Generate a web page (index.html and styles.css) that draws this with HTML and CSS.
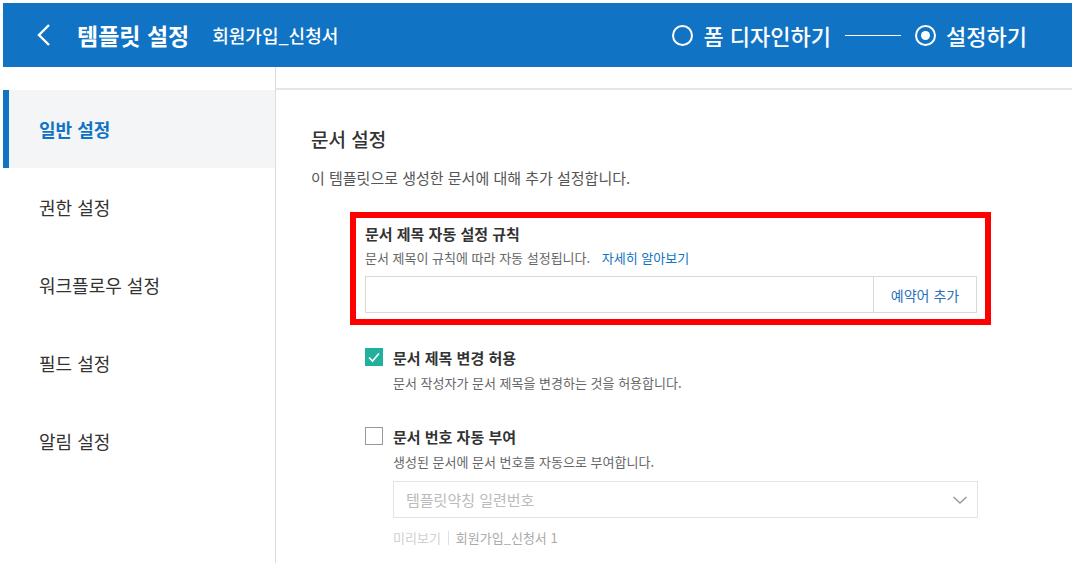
FILE: index.html
```html
<!doctype html>
<html lang="ko">
<head>
    <meta charset="utf-8">
    <meta name="viewport" content="width=device-width, initial-scale=1">
    <title>템플릿 설정</title>
    <link rel="stylesheet" href="styles.css">
</head>
<body>
<div class="app">
    <!-- 상단 바 -->
    <div class="topbar">
        <div class="topbar-left">
            <svg class="back" width="16" height="24" viewBox="0 0 16 24">
                <path d="M13 2 L3 12 L13 22" fill="none" stroke="#fff" stroke-width="2.4"/>
            </svg>
            <span class="page-title">템플릿 설정</span>
            <span class="form-name">회원가입_신청서</span>
        </div>
        <div class="steps">
            <span class="step"><span class="radio"></span>폼 디자인하기</span>
            <span class="step-line"></span>
            <span class="step"><span class="radio on"></span>설정하기</span>
        </div>
    </div>

    <div class="main">
        <!-- 사이드 메뉴 -->
        <div class="sidebar">
            <a class="menu-item active" href="#">일반 설정</a>
            <a class="menu-item" href="#">권한 설정</a>
            <a class="menu-item" href="#">워크플로우 설정</a>
            <a class="menu-item" href="#">필드 설정</a>
            <a class="menu-item" href="#">알림 설정</a>
        </div>

        <!-- 설정 내용 -->
        <div class="content">
            <div class="content-top"></div>
            <div class="content-body">
                <h2 class="section-title">문서 설정</h2>
                <p class="section-desc">이 템플릿으로 생성한 문서에 대해 추가 설정합니다.</p>

                <div class="rule-box">
                    <div class="field-title">문서 제목 자동 설정 규칙</div>
                    <div class="field-desc">문서 제목이 규칙에 따라 자동 설정됩니다. <a href="#" class="more">자세히 알아보기</a></div>
                    <div class="input-group">
                        <input type="text" class="input">
                        <button class="btn-add">예약어 추가</button>
                    </div>
                </div>

                <div class="option">
                    <div class="option-row">
                        <span class="check checked">
                            <svg width="18" height="18" viewBox="0 0 18 18">
                                <path d="M4 9.5 L7.5 13 L14 5.5" fill="none" stroke="#fff" stroke-width="1.6"/>
                            </svg>
                        </span>
                        <span class="option-label">문서 제목 변경 허용</span>
                    </div>
                    <div class="option-desc">문서 작성자가 문서 제목을 변경하는 것을 허용합니다.</div>
                </div>

                <div class="option">
                    <div class="option-row">
                        <span class="check"></span>
                        <span class="option-label">문서 번호 자동 부여</span>
                    </div>
                    <div class="option-desc">생성된 문서에 문서 번호를 자동으로 부여합니다.</div>
                    <div class="select">
                        <span>템플릿약칭 일련번호</span>
                        <svg width="16" height="10" viewBox="0 0 16 10">
                            <path d="M1.5 2 L8 8 L14.5 2" fill="none" stroke="#999" stroke-width="1.5"/>
                        </svg>
                    </div>
                    <div class="preview">
                        <span class="preview-label">미리보기</span>
                        <span class="preview-sep"></span>
                        <span class="preview-value">회원가입_신청서 1</span>
                    </div>
                </div>
            </div>
        </div>
    </div>
</div>
</body>
</html>
```

FILE: styles.css
```css
/* 색상 변수 */
:root {
    --primary: #1073c4;
    --text: #333;
    --text-sub: #666;
    --border: #d9d9d9;
    --check: #20b09c;
}

body {
    margin: 0;
    background: #fff;
    color: var(--text);
    font-family: "Noto Sans CJK KR", "Noto Sans", sans-serif;
}

.app {
    padding: 3px 3px 0 3px;
}

/* 상단 바 */
.topbar {
    height: 64px;
    background: var(--primary);
    color: #fff;
    display: flex;
    align-items: center;
    justify-content: space-between;
}

.topbar-left {
    display: flex;
    align-items: center;
    padding-left: 33px;
}

.back {
    margin-right: 25px;
}

.page-title {
    font-size: 23px;
    font-weight: 700;
    margin-right: 23px;
}

.form-name {
    font-size: 18px;
    font-weight: 500;
}

.steps {
    display: flex;
    align-items: center;
    padding-right: 45px;
}

.step {
    display: flex;
    align-items: center;
    font-size: 22px;
    font-weight: 500;
}

.radio {
    width: 17px;
    height: 17px;
    border: 2px solid #fff;
    border-radius: 50%;
    margin-right: 10px;
    position: relative;
}

.radio.on::after {
    content: "";
    position: absolute;
    left: 4px;
    top: 4px;
    width: 9px;
    height: 9px;
    border-radius: 50%;
    background: #fff;
}

.step-line {
    width: 56px;
    height: 1px;
    background: #fff;
    margin: 0 14px 0 14px;
}

/* 본문 */
.main {
    display: flex;
    height: 496px;
}

.sidebar {
    width: 272px;
    border-right: 1px solid #ddd;
    padding-top: 23px;
    flex-shrink: 0;
}

.menu-item {
    display: flex;
    align-items: center;
    height: 78px;
    padding-left: 30px;
    border-left: 6px solid transparent;
    color: var(--text);
    text-decoration: none;
    font-size: 18px;
}

.menu-item.active {
    background: #f4f5f7;
    border-left-color: var(--primary);
    color: var(--primary);
    font-weight: 700;
}

.content {
    flex: 1;
}

.content-top {
    height: 21px;
    border-bottom: 2px solid #e6e6e6;
}

.content-body {
    padding: 36px 0 0 35px;
}

.section-title {
    margin: 0;
    font-size: 19px;
    font-weight: 500;
    line-height: 26px;
}

.section-desc {
    margin: 16px 0 0 0;
    font-size: 15px;
    color: #555;
    line-height: 20px;
}

/* 빨간 강조 박스 */
.rule-box {
    margin: 24px 0 0 39px;
    width: 612px;
    border: 6px solid #ff0000;
    padding: 6px 8px 6px 9px;
}

.field-title {
    font-size: 15px;
    font-weight: 700;
    line-height: 20px;
}

.field-desc {
    font-size: 13px;
    color: var(--text-sub);
    line-height: 18px;
    margin-top: 5px;
}

.more {
    color: var(--primary);
    text-decoration: none;
    margin-left: 8px;
}

.input-group {
    display: flex;
    height: 37px;
    border: 1px solid var(--border);
    margin-top: 9px;
    box-sizing: border-box;
}

.input {
    flex: 1;
    border: none;
    outline: none;
    padding: 0 10px;
    font-family: inherit;
}

.btn-add {
    width: 103px;
    border: none;
    border-left: 1px solid var(--border);
    background: #fff;
    color: #2a6fb8;
    font-family: inherit;
    font-size: 14px;
    cursor: pointer;
}

/* 체크 옵션 */
.option {
    margin-left: 54px;
}

.rule-box + .option {
    margin-top: 23px;
}

.option + .option {
    margin-top: 35px;
}

.option-row {
    display: flex;
    align-items: center;
    height: 18px;
}

.check {
    width: 18px;
    height: 18px;
    box-sizing: border-box;
    border: 1px solid #999;
    margin-right: 10px;
    display: flex;
}

.check.checked {
    border: none;
    background: var(--check);
}

.option-label {
    font-size: 15px;
    font-weight: 700;
}

.option-desc {
    margin: 8px 0 0 28px;
    font-size: 13px;
    color: var(--text-sub);
    line-height: 18px;
}

.select {
    margin: 10px 0 0 28px;
    width: 585px;
    height: 37px;
    box-sizing: border-box;
    border: 1px solid #e3e3e3;
    display: flex;
    align-items: center;
    justify-content: space-between;
    padding: 0 9px 0 12px;
    font-size: 15px;
    color: #bbb;
}

.preview {
    margin: 10px 0 0 28px;
    display: flex;
    align-items: center;
    font-size: 13px;
}

.preview-label {
    color: #d0d0d0;
}

.preview-sep {
    width: 1px;
    height: 14px;
    background: #e0e0e0;
    margin: 0 7px;
}

.preview-value {
    color: #aaa;
}
```
